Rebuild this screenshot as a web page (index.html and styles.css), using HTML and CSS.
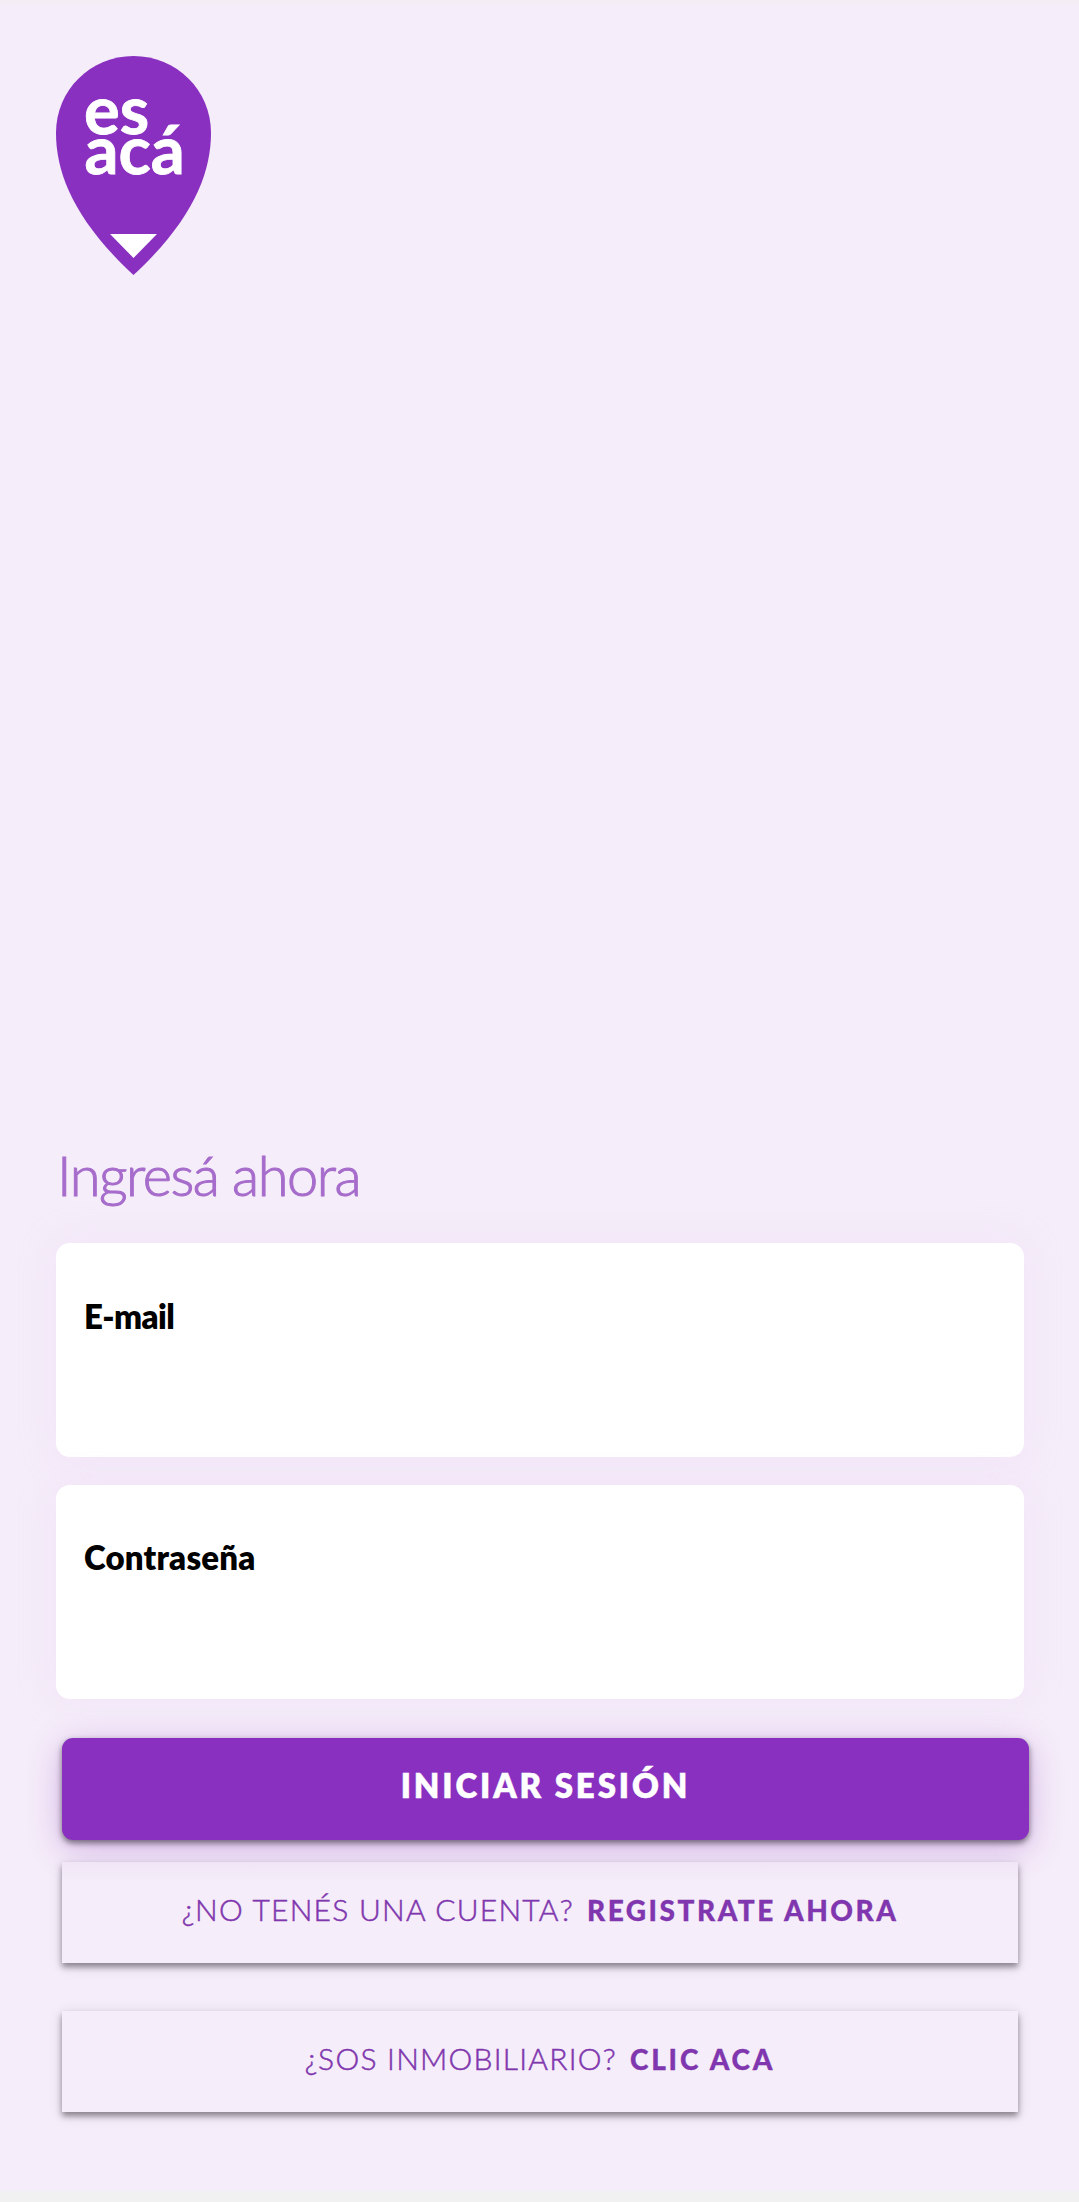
FILE: index.html
```html
<!DOCTYPE html>
<html lang="es">
<head>
<meta charset="utf-8">
<title>es acá – Ingresá ahora</title>
<link rel="stylesheet" href="styles.css">
</head>
<body>
<main class="screen">
  <svg class="logo" viewBox="0 0 155 219" role="img" aria-label="es acá">
    <path class="pin" d="M77.500 0C120.500 0 155 34 155 77C155 118 136 165 77.500 219C19 165 0 118 0 77C0 34 34.500 0 77.500 0Z"/>
    <text class="logo-text" x="28" y="78">es</text>
    <text class="logo-text" x="28.500" y="118">acá</text>
    <path class="tip" d="M54 178H101L77.500 202Z"/>
  </svg>

  <form class="login">
    <h1 class="title">Ingresá ahora</h1>
    <label class="field field-email">E-mail</label>
    <label class="field field-password">Contraseña</label>
    <button class="submit" type="button">INICIAR SESIÓN</button>
    <a class="link"><span class="question">¿NO TENÉS UNA CUENTA?</span><strong class="action">REGISTRATE AHORA</strong></a>
    <a class="link link-agency"><span class="question">¿SOS INMOBILIARIO?</span><strong class="action">CLIC ACA</strong></a>
  </form>
</main>
</body>
</html>
```
FILE: styles.css
```css
* {
  box-sizing: border-box;
}

body {
  margin: 0;
  background: #f1f1f1;
  font-family: Lato, "Open Sans", sans-serif;
}

.screen {
  display: flex;
  flex-direction: column;
  justify-content: space-between;
  height: 2191px;
  padding: 52px 50px 79px 56px;
  background: #f5edf9;
  border-top: 4px solid #f4eef4;
}

.logo {
  width: 155px;
  height: 219px;
}

.pin {
  fill: #8930c0;
}

.tip,
.logo-text {
  fill: #fff;
}

.logo-text {
  font-size: 67px;
  font-weight: 700;
  stroke: #fff;
  stroke-width: 0.8px;
}

.login {
  display: flex;
  flex-direction: column;
}

.title {
  margin: 0 0 34px;
  padding-top: 1px;
  color: #a66ccb;
  font-size: 56px;
  font-weight: 300;
  line-height: 68px;
  letter-spacing: -1.5px;
  text-indent: 1px;
  -webkit-text-stroke: 1px #a66ccb;
}

.field {
  width: 968px;
  height: 214px;
  margin-bottom: 28px;
  padding: 53px 28px;
  border-radius: 14px;
  background: #fff;
  box-shadow: 0 0 36px rgba(235, 205, 250, 0.3);
  color: #000;
  font-size: 33px;
  font-weight: 800;
  line-height: 40px;
  letter-spacing: -0.6px;
}

.field-password {
  margin-bottom: 39px;
  padding-top: 52px;
  letter-spacing: 0.2px;
}

.submit {
  width: 967px;
  height: 102px;
  margin: 0 0 22px 6px;
  padding: 0 0 8px;
  border: 0;
  border-radius: 11px;
  background: #8930c0;
  box-shadow: 0 3px 6px rgba(0, 0, 0, 0.5), 0 8px 34px rgba(137, 48, 192, 0.32);
  color: #fff;
  font-family: inherit;
  font-size: 33px;
  font-weight: 800;
  letter-spacing: 2.9px;
  -webkit-text-stroke: 0.4px #fff;
}

.link {
  display: flex;
  align-items: baseline;
  justify-content: center;
  gap: 13px;
  width: 956px;
  height: 101px;
  margin: 0 0 48px 6px;
  padding-top: 29px;
  background: linear-gradient(#f0e5f6, #f5edf9 20px);
  box-shadow: 0 4px 6px rgba(0, 0, 0, 0.4), 0 3px 14px rgba(60, 20, 80, 0.12);
  color: #8036ae;
  line-height: 36px;
}

.link-agency {
  margin-bottom: 0;
  background: #f5edf9;
}

.question {
  font-size: 30px;
  font-weight: 300;
  letter-spacing: 1.25px;
  -webkit-text-stroke: 0.5px #8036ae;
}

.action {
  font-size: 28px;
  font-weight: 900;
  letter-spacing: 2.5px;
  -webkit-text-stroke: 0.3px #8036ae;
}

.link-agency .action {
  letter-spacing: 2.8px;
}
```
